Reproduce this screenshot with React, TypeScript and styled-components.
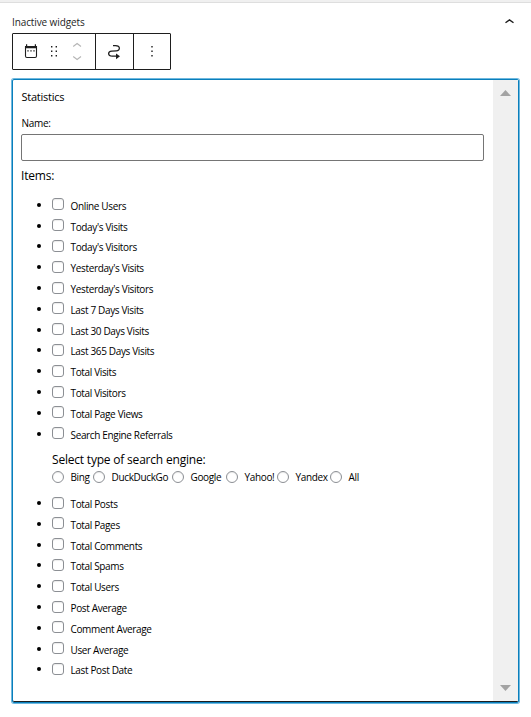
import React from 'react';
import styled, { createGlobalStyle } from 'styled-components';

const Global = createGlobalStyle`
  * { box-sizing: border-box; }
  body { margin: 0; background: #fff; color: #000; font-family: "Open Sans", "Noto Sans", sans-serif; }
`;

const Page = styled.main`
  width: 531px;
  height: 717px;
  overflow: hidden;
  border-top: 2px solid #f0f0f0;
`;

const Header = styled.header`
  display: flex;
  justify-content: space-between;
  height: 31px;
  padding: 12px 16px 0 12px;
  border-top: 1px solid #dedede;
`;

const Title = styled.h2`
  margin: -0.6px 0 0;
  color: #1e1e1e;
  font-size: 10px;
  font-weight: 400;
  line-height: 16px;
  letter-spacing: -0.11px;
`;

const Toolbar = styled.div`
  display: flex;
  width: 159px;
  height: 37px;
  margin-left: 12px;
  border: 1px solid #1e1e1e;
  border-radius: 1px;
`;

const Group = styled.div<{ $width: number }>`
  width: ${(p) => p.$width}px;
  & + & { border-left: 1px solid #1e1e1e; }
  svg { display: block; }
`;

const Panel = styled.section`
  display: flex;
  width: 507px;
  height: 624px;
  margin: 9px 0 0 12px;
  border: 1px solid #0a7fbc;
  border-radius: 2px;
  box-shadow: inset 0 -1px #1e1e1e, 0 0 0 1px #6fb8de;
`;

const Content = styled.div`
  flex: 1;
  padding: 8px 9px 0 8px;
`;

const Heading = styled.h3`
  margin: 0 0 0 0.5px;
  font-size: 11px;
  font-weight: 400;
  line-height: 18px;
  letter-spacing: -0.24px;
`;

const FieldLabel = styled.label`
  display: block;
  margin: 9px 0 0 0.5px;
  font-size: 10px;
  line-height: 16px;
  letter-spacing: -0.3px;
`;

const Field = styled.input`
  display: block;
  width: 463px;
  height: 27px;
  margin-top: 3px;
  border: 1px solid #757575;
  border-radius: 2px;
  outline: 0;
`;

const Caption = styled.p<{ $top: number }>`
  margin: ${(p) => p.$top}px 0 0;
  font-size: 12px;
  line-height: 18px;
  letter-spacing: -0.2px;
`;

const List = styled.ul<{ $top: number }>`
  margin: ${(p) => p.$top}px 0 0;
  padding: 0 0 0 16px;
  list-style: none;
`;

const Item = styled.li`
  display: flex;
  align-items: center;
  height: 20.8px;
  &::before {
    content: "";
    width: 4px;
    height: 4px;
    margin: 1px 11px 0 0;
    border-radius: 50%;
    background: #000;
  }
`;

const Control = styled.input<{ $round?: boolean }>`
  appearance: none;
  flex: none;
  width: 12px;
  height: 12px;
  margin: 0;
  border: 1px solid #8c8f94;
  border-radius: ${(p) => (p.$round ? '50%' : '3px')};
  background: #fff;
  box-shadow: inset 0 1px 1px rgba(0, 0, 0, 0.08);
`;

const Label = styled.span<{ $top?: number }>`
  margin: ${(p) => p.$top ?? 2.8}px 0 0 6.5px;
  font-size: 10px;
  line-height: 14px;
  white-space: nowrap;
  letter-spacing: -0.35px;
`;

const Engines = styled.div`
  display: flex;
  align-items: center;
  height: 16px;
  margin-left: 31px;
`;

const Engine = styled.label<{ $width: number }>`
  display: flex;
  align-items: center;
  width: ${(p) => p.$width}px;
`;

const Nested = styled.div`
  margin-left: 31px;
`;

const Scrollbar = styled.div`
  display: flex;
  flex-direction: column;
  justify-content: space-between;
  align-items: center;
  width: 25px;
  margin-bottom: 1px;
  padding: 10px 0 10px;
  background: #f0f0f0;
  svg { display: block; }
`;

const first = [
  'Online Users', 'Today\'s Visits', 'Today\'s Visitors', 'Yesterday\'s Visits', 'Yesterday\'s Visitors',
  'Last 7 Days Visits', 'Last 30 Days Visits', 'Last 365 Days Visits', 'Total Visits', 'Total Visitors',
  'Total Page Views', 'Search Engine Referrals',
];
const second = [
  'Total Posts', 'Total Pages', 'Total Comments', 'Total Spams', 'Total Users', 'Post Average',
  'Comment Average', 'User Average', 'Last Post Date',
];
const engines: [string, number][] = [
  ['Bing', 41], ['DuckDuckGo', 79], ['Google', 54], ['Yahoo!', 51], ['Yandex', 53], ['All', 40],
];

const Options = ({ labels, top }: { labels: string[]; top: number }) => (
  <List $top={top}>
    {labels.map((label) => (
      <Item key={label}>
        <Control type="checkbox" aria-label={label} />
        <Label>{label}</Label>
      </Item>
    ))}
  </List>
);

export default function App() {
  return (
    <>
      <Global />
      <Page>
        <Header>
          <Title>Inactive widgets</Title>
          <svg width="11" height="10" viewBox="0 0 11 10" fill="none" stroke="#1e1e1e" strokeWidth="1.4">
            <path d="M1.5 7.8 5.5 4.9 9.5 7.8" />
          </svg>
        </Header>
        <Toolbar>
          <Group $width={82}>
            <svg width="82" height="35" viewBox="0 0 82 35">
              <path d="M12.5 12.5h11v9.6q0 1.4-1.4 1.4h-8.2q-1.4 0-1.4-1.4z" fill="none" stroke="#1e1e1e" strokeWidth="1.1" />
              <path d="M12 12h12v2.3H12zM13 10.3h1.2V12H13zM21.8 10.3H23V12h-1.2z" fill="#1e1e1e" />
              <path d="M14.2 16.2h1.6v1.3h-1.6zM17.2 16.2h1.6v1.3h-1.6zM20.2 16.2h1.6v1.3h-1.6z" fill="#444" />
              <path d="M38 12h1.4v1.4H38zM42.6 12H44v1.4h-1.4zM38 16.5h1.4v1.4H38zM42.6 16.5H44v1.4h-1.4zM38 21h1.4v1.4H38zM42.6 21H44v1.4h-1.4z" fill="#1e1e1e" />
              <path d="m60.2 12.5 3.9-3 3.9 3M60.2 22.5l3.9 3 3.9-3" fill="none" stroke="#b5b5b5" strokeWidth="1.1" />
            </svg>
          </Group>
          <Group $width={38}>
            <svg width="37" height="35" viewBox="0 0 37 35">
              <path d="M17 11.7h2.5c5 0 5 4.9.8 5.1l-4.5.3c-4.3.3-4.3 5.1.5 5.1H21" fill="none" stroke="#1e1e1e" strokeWidth="1.3" />
              <path d="m20 19.4 4 2.9-4 2.9z" fill="#1e1e1e" />
            </svg>
          </Group>
          <Group $width={37}>
            <svg width="36" height="35" viewBox="0 0 36 35">
              <path d="M17.3 12h1.4v1.4h-1.4zM17.3 16.5h1.4v1.4h-1.4zM17.3 21h1.4v1.4h-1.4z" fill="#1e1e1e" />
            </svg>
          </Group>
        </Toolbar>
        <Panel>
          <Content>
            <Heading>Statistics</Heading>
            <FieldLabel htmlFor="name">Name:</FieldLabel>
            <Field id="name" />
            <Caption $top={6}>Items:</Caption>
            <Options labels={first} top={9} />
            <Nested>
              <Caption $top={7}>Select type of search engine:</Caption>
            </Nested>
            <Engines>
              {engines.map(([name, width]) => (
                <Engine key={name} $width={width}>
                  <Control type="radio" name="engine" $round />
                  <Label $top={1}>{name}</Label>
                </Engine>
              ))}
            </Engines>
            <Options labels={second} top={7.6} />
          </Content>
          <Scrollbar>
            <svg width="11" height="6" viewBox="0 0 11 6"><path d="M0 6 5.5 0 11 6z" fill="#a3a3a3" /></svg>
            <svg width="11" height="6" viewBox="0 0 11 6"><path d="M0 0 5.5 6 11 0z" fill="#a3a3a3" /></svg>
          </Scrollbar>
        </Panel>
      </Page>
    </>
  );
}
